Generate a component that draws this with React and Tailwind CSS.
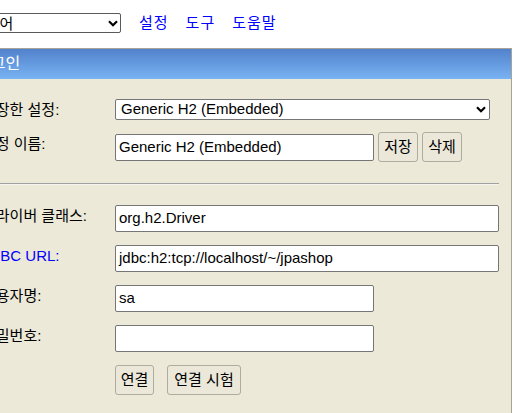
import React from "react";

function Chevron() {
  return (
    <svg width="10" height="7" viewBox="0 0 10 7" className="shrink-0">
      <path d="M1 1.3 L5 5.3 L9 1.3" fill="none" stroke="#000" strokeWidth="2.2" strokeLinecap="butt" strokeLinejoin="miter" />
    </svg>
  );
}

function Label({ children, blue, shift }) {
  return (
    <div
      className={
        "w-[175px] pl-[42px] shrink-0 whitespace-nowrap leading-[18px] " +
        (shift ? "pb-[6px] " : "") +
        (blue ? "text-[#0000ff]" : "text-black")
      }
    >
      {children}
    </div>
  );
}

function Input({ value, wide }) {
  return (
    <div
      className={
        "h-[27px] border border-[#767676] rounded-[2px] bg-white flex items-center pl-[3px] whitespace-nowrap overflow-hidden " +
        (wide ? "w-[384px]" : "w-[259px]")
      }
    >
      {value}
    </div>
  );
}

function Btn({ children, w }) {
  return (
    <div
      className={
        "h-[30px] border border-[#aeab9f] rounded-[3px] bg-[#ebe8da] flex items-center justify-center whitespace-nowrap " +
        w
      }
    >
      {children}
    </div>
  );
}

export default function App() {
  return (
    <div className="w-[517px] h-[413px] overflow-hidden bg-white text-[15px] text-black font-['Liberation_Sans','Noto_Sans_CJK_KR',sans-serif]">
      <div className="-ml-[60px] w-[640px]">
        {/* top bar */}
        <div className="h-[48px] flex items-start pt-[13px]">
          <div className="ml-[23px] w-[158px] h-[20px] border border-[#5a5a5a] rounded-[2px] bg-white flex items-center pl-[8px] pr-[2px]">
            <span className="flex-1 leading-none whitespace-nowrap">한국어</span>
            <Chevron />
          </div>
          <div className="ml-[18px] h-[20px] flex items-center gap-[17px] text-[#0000ff] tracking-[1px]">
            <span>설정</span>
            <span>도구</span>
            <span>도움말</span>
          </div>
        </div>

        {/* panel */}
        <div className="w-[572px] h-[365px] border-t border-r border-[#a7a497] bg-[#ece9d8]">
          <div className="h-[30px] bg-linear-to-b from-[#5282cc] to-[#79b3f3] flex items-center pl-[36px] text-white text-[16px]">
            로그인
          </div>
          <div className="pt-[20px]">
            <div className="flex items-center h-[21px]">
              <Label>저장한 설정:</Label>
              <div className="w-[375px] h-[21px] border border-[#767676] rounded-[2px] bg-white flex items-center pl-[5px] pr-[3px]">
                <span className="flex-1 whitespace-nowrap">Generic H2 (Embedded)</span>
                <Chevron />
              </div>
            </div>

            <div className="mt-[12px] flex items-center h-[30px]">
              <Label shift>설정 이름:</Label>
              <Input value="Generic H2 (Embedded)" />
              <div className="ml-[4px] flex gap-[4px]">
                <Btn w="w-[40px]">저장</Btn>
                <Btn w="w-[40px]">삭제</Btn>
              </div>
            </div>

            <div className="mt-[21px] w-[559px] h-[2px] border-t border-[#a0a0a0] border-b border-b-[#f4f3ee]" />

            <div className="mt-[20px] flex items-center h-[27px]">
              <Label shift>드라이버 클래스:</Label>
              <Input value="org.h2.Driver" wide />
            </div>
            <div className="mt-[13px] flex items-center h-[27px]">
              <Label shift blue>JDBC URL:</Label>
              <Input value="jdbc:h2:tcp://localhost/~/jpashop" wide />
            </div>
            <div className="mt-[13px] flex items-center h-[27px]">
              <Label shift>사용자명:</Label>
              <Input value="sa" />
            </div>
            <div className="mt-[13px] flex items-center h-[27px]">
              <Label shift>비밀번호:</Label>
              <Input value="" />
            </div>
            <div className="mt-[13px] flex items-center h-[30px]">
              <div className="w-[175px] shrink-0" />
              <Btn w="w-[39px]">연결</Btn>
              <div className="ml-[13px]">
                <Btn w="w-[74px]">연결 시험</Btn>
              </div>
            </div>
          </div>
        </div>
      </div>
    </div>
  );
}
